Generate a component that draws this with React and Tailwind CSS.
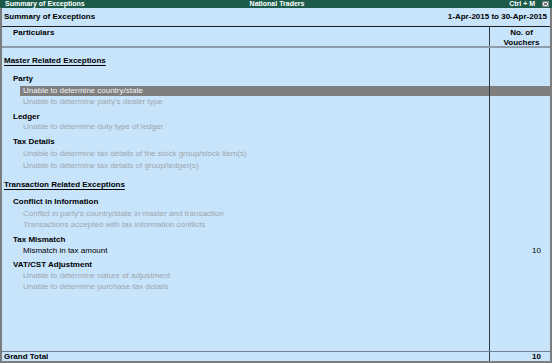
import React from "react";

const GRAY = "text-[#9ca6ae]";

function Row({ h, children, right, className = "" }) {
  return (
    <div className={`flex ${h} ${className}`}>
      <div className="flex-1 flex items-center min-w-0">{children}</div>
      <div className="w-[61px] border-l border-[#2c3a46] flex items-center justify-end pr-[9px]">
        {right}
      </div>
    </div>
  );
}

function Spacer({ h }) {
  return <Row h={h} />;
}

function Section({ label }) {
  return <span className="pl-[2px] font-bold underline underline-offset-[2px]">{label}</span>;
}

function Group({ label }) {
  return <span className="pl-[11px] font-bold">{label}</span>;
}

function Item({ label, dim = true }) {
  return <span className={`pl-[21px] ${dim ? GRAY : "text-black"}`}>{label}</span>;
}

export default function App() {
  return (
    <div
      className="w-[552px] h-[363px] flex flex-col text-[8px] leading-[10px] text-black bg-[#c8e4fb] overflow-hidden"
      style={{ fontFamily: '"Liberation Sans", Arial, sans-serif' }}
    >
      {/* title bar */}
      <div className="h-[8px] bg-[#1c5b4a] flex items-center text-white font-bold text-[7px] leading-[8px]">
        <div className="flex-1 pl-[5px]">Summary of Exceptions</div>
        <div>National Traders</div>
        <div className="flex-1 flex justify-end items-center gap-[7px] pr-[3px]">
          <span>Ctrl + M</span>
          <span className="w-[7px] h-[6px] bg-white border border-[#7c8a86] flex items-center justify-center">
            <svg width="5" height="4" viewBox="0 0 5 4">
              <path d="M0.5 0.5 L4.5 3.5 M4.5 0.5 L0.5 3.5" stroke="#333" strokeWidth="0.9" />
            </svg>
          </span>
        </div>
      </div>

      <div className="flex-1 flex flex-col border-l-2 border-r-2 border-b-2 border-[#7d7d7d]">
        {/* report header */}
        <div className="h-[19px] flex items-center justify-between px-[2px] font-bold border-b border-[#1e1e1e]">
          <span>Summary of Exceptions</span>
          <span className="pr-[1px]">1-Apr-2015 to 30-Apr-2015</span>
        </div>

        {/* column header */}
        <div className="flex h-[21px] border-b-2 border-[#8c9cab] font-bold">
          <div className="flex-1 pl-[11px] pt-[1px]">Particulars</div>
          <div className="w-[61px] border-l border-[#2c3a46] flex flex-col items-end pr-[4px] pt-[1px]">
            <span className="w-[49px] text-center">No. of</span>
            <span className="w-[49px] text-center">Vouchers</span>
          </div>
        </div>

        {/* body */}
        <div className="flex-1 flex flex-col">
          <Spacer h="h-[7px]" />
          <Row h="h-[12px]"><Section label="Master Related Exceptions" /></Row>
          <Spacer h="h-[6px]" />
          <Row h="h-[12px]"><Group label="Party" /></Row>
          <div className="flex h-[11px] items-center">
            <div className="flex-1 h-[10px] ml-[18px] bg-[#7f7f7f] text-[#f4f4f4] pl-[3px] flex items-center">
              Unable to determine country/state
            </div>
            <div className="w-[61px] h-full border-l border-[#2c3a46] flex items-center">
              <div className="w-full h-[10px] bg-[#7f7f7f]" />
            </div>
          </div>
          <Row h="h-[11px]"><Item label="Unable to determine party's dealer type" /></Row>
          <Spacer h="h-[4px]" />
          <Row h="h-[11px]"><Group label="Ledger" /></Row>
          <Row h="h-[10px]"><Item label="Unable to determine duty type of ledger" /></Row>
          <Spacer h="h-[3px]" />
          <Row h="h-[13px]"><Group label="Tax Details" /></Row>
          <Row h="h-[12px]"><Item label="Unable to determine tax details of the stock group/stock item(s)" /></Row>
          <Row h="h-[12px]"><Item label="Unable to determine tax details of group/ledger(s)" /></Row>
          <Spacer h="h-[7px]" />
          <Row h="h-[12px]"><Section label="Transaction Related Exceptions" /></Row>
          <Spacer h="h-[5px]" />
          <Row h="h-[12px]"><Group label="Conflict in Information" /></Row>
          <Row h="h-[11px]"><Item label="Conflict in party's country/state in master and transaction" /></Row>
          <Row h="h-[11px]"><Item label="Transactions accepted with tax information conflicts" /></Row>
          <Spacer h="h-[4px]" />
          <Row h="h-[11px]"><Group label="Tax Mismatch" /></Row>
          <Row h="h-[11px]" right={<span>10</span>}><Item label="Mismatch in tax amount" dim={false} /></Row>
          <Spacer h="h-[3px]" />
          <Row h="h-[11px]"><Group label="VAT/CST Adjustment" /></Row>
          <Row h="h-[11px]"><Item label="Unable to determine nature of adjustment" /></Row>
          <Row h="h-[11px]"><Item label="Unable to determine purchase tax details" /></Row>
          <Row h="flex-1" />
        </div>

        {/* grand total */}
        <div className="flex h-[10px] border-t border-[#6f7f8d] font-bold">
          <div className="flex-1 pl-[2px] flex items-center">Grand Total</div>
          <div className="w-[61px] border-l border-[#2c3a46] flex items-center justify-end pr-[9px]">10</div>
        </div>
      </div>
    </div>
  );
}
